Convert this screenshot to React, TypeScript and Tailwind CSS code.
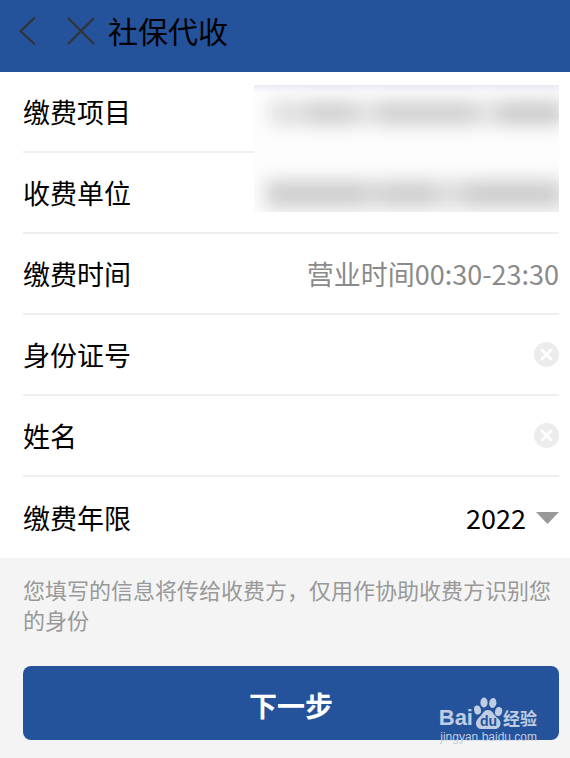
import React, { useState } from "react";

interface RowProps {
  label: string;
  htmlFor?: string;
  last?: boolean;
  children?: React.ReactNode;
}

const Row: React.FC<RowProps> = ({ label, htmlFor, last, children }) => {
  return (
    <div
      className={
        last
          ? "flex h-[81px] items-center justify-between"
          : "flex h-[81px] items-center justify-between border-b-2 border-[#efefef]"
      }
    >
      <label htmlFor={htmlFor} className="shrink-0 text-black">
        {label}
      </label>
      {children}
    </div>
  );
};

interface ClearFieldProps {
  id: string;
  value: string;
  onChange: (value: string) => void;
}

const ClearField: React.FC<ClearFieldProps> = ({ id, value, onChange }) => {
  return (
    <div className="flex flex-1 items-center pl-6">
      <input
        id={id}
        type="text"
        value={value}
        onChange={(e) => onChange(e.target.value)}
        className="min-w-0 flex-1 bg-transparent text-right outline-none"
      />
      <button type="button" aria-label="清除" onClick={() => onChange("")}>
        <svg width="25" height="25" viewBox="0 0 25 25" className="block">
          <circle cx="12.5" cy="12.5" r="12.5" fill="#ececec" />
          <path
            d="M8 8l9 9M17 8l-9 9"
            stroke="#fff"
            strokeWidth="2.8"
            strokeLinecap="round"
          />
        </svg>
      </button>
    </div>
  );
};

// Covers the private values of the first two rows
const PrivacyMask = () => {
  return (
    <div className="absolute top-[13px] right-[11px] flex h-[127px] w-[305px] flex-col justify-between overflow-hidden bg-[#fdfdfd] bg-linear-to-b from-[#e9ebf5] to-transparent to-6% pt-4 pb-1">
      <div className="-mr-1 ml-4 flex h-6 blur-[9px]">
        <div className="flex-1 bg-[#dedede]" />
        <div className="w-12 bg-[#cfcfcf]" />
        <div className="w-6 bg-[#e0e0e0]" />
        <div className="w-24 bg-[#cfcfcf]" />
        <div className="w-6 bg-[#e0e0e0]" />
        <div className="w-16 bg-[#cacaca]" />
      </div>
      <div className="-mr-1 ml-3 flex h-7 blur-[9px]">
        <div className="w-24 bg-[#cecece]" />
        <div className="w-6 bg-[#d6d6d6]" />
        <div className="w-12 bg-[#cfcfcf]" />
        <div className="w-8 bg-[#dcdcdc]" />
        <div className="flex-1 bg-[#cdcdcd]" />
      </div>
    </div>
  );
};

const Watermark = () => {
  return (
    <div className="pointer-events-none absolute right-[22px] -bottom-1 text-[#c0cde2]">
      <div className="flex items-end">
        <span className="font-['Liberation_Sans',sans-serif] text-[22px] leading-6 font-bold">
          Bai
        </span>
        <svg width="30" height="33" viewBox="0 0 30 33" fill="currentColor">
          <ellipse cx="4.5" cy="13" rx="3.4" ry="4.6" transform="rotate(-12 4.5 13)" />
          <ellipse cx="11" cy="5.5" rx="3.6" ry="5" />
          <ellipse cx="19.8" cy="6" rx="3.6" ry="5" transform="rotate(10 19.8 6)" />
          <ellipse cx="25.6" cy="14.5" rx="3.5" ry="4.6" transform="rotate(14 25.6 14.5)" />
          <path d="M15 13c-4 0-5 3.500-7.500 6S3 23 3 26.500 5.500 32 9 32h12.500c3.500 0 6-2 6-5.500s-2.500-5-5-7.500S19 13 15 13z" />
          <text
            x="15.500"
            y="28.500"
            textAnchor="middle"
            fill="#24539b"
            fontFamily="Liberation Sans, sans-serif"
            fontWeight="bold"
            fontSize="14"
          >
            du
          </text>
        </svg>
        <span className="text-[17px] leading-6 font-bold">经验</span>
      </div>
      <div className="text-right font-['Liberation_Sans',sans-serif] text-[12px] leading-[14px]">
        jingyan.baidu.com
      </div>
    </div>
  );
};

const App = () => {
  const [idNumber, setIdNumber] = useState("");
  const [name, setName] = useState("");
  const [year, setYear] = useState("2022");

  return (
    <div className="min-h-screen bg-[#f4f4f4] font-['Noto_Sans_CJK_SC',sans-serif]">
      <header className="flex h-[72px] items-start bg-[#24539b] pt-4 pl-[18px]">
        <button type="button" aria-label="返回">
          <svg width="20" height="30" viewBox="0 0 20 30" fill="none" className="block">
            <path d="M17 1.500L2.500 15L17 28.500" stroke="#333" strokeWidth="2" />
          </svg>
        </button>
        <button type="button" aria-label="关闭" className="ml-7">
          <svg width="30" height="30" viewBox="0 0 30 30" fill="none" className="block">
            <path d="M2 2L28 28M28 2L2 28" stroke="#333" strokeWidth="2" />
          </svg>
        </button>
        <h1 className="ml-3 text-[30px] leading-7 text-black">社保代收</h1>
      </header>

      <form onSubmit={(e) => e.preventDefault()}>
        <div className="relative bg-white pr-[11px] pl-[23px] text-[27px] leading-10">
          <Row label="缴费项目" />
          <Row label="收费单位" />
          <PrivacyMask />
          <Row label="缴费时间">
            <span className="text-[#8a8a8a]">营业时间00:30-23:30</span>
          </Row>
          <Row label="身份证号" htmlFor="idNumber">
            <ClearField id="idNumber" value={idNumber} onChange={setIdNumber} />
          </Row>
          <Row label="姓名" htmlFor="name">
            <ClearField id="name" value={name} onChange={setName} />
          </Row>
          <Row label="缴费年限" htmlFor="year" last>
            <div className="flex items-center gap-2.5">
              <select
                id="year"
                value={year}
                onChange={(e) => setYear(e.target.value)}
                className="appearance-none bg-transparent text-black outline-none"
              >
                <option value="2022">2022</option>
              </select>
              <svg width="23" height="12" viewBox="0 0 23 12">
                <path d="M0 0h23L11.500 12z" fill="#999" />
              </svg>
            </div>
          </Row>
        </div>

        <div className="pt-4 pr-[11px] pb-[18px] pl-[23px]">
          <p className="text-[22px] leading-[30px] text-[#999]">
            您填写的信息将传给收费方，仅用作协助收费方识别您的身份
          </p>
          <div className="relative mt-8">
            <button
              type="submit"
              className="block h-[74px] w-full rounded-lg bg-[#24539b] pt-1 text-[28px] font-bold text-white"
            >
              下一步
            </button>
            <Watermark />
          </div>
        </div>
      </form>
    </div>
  );
};

export default App;
